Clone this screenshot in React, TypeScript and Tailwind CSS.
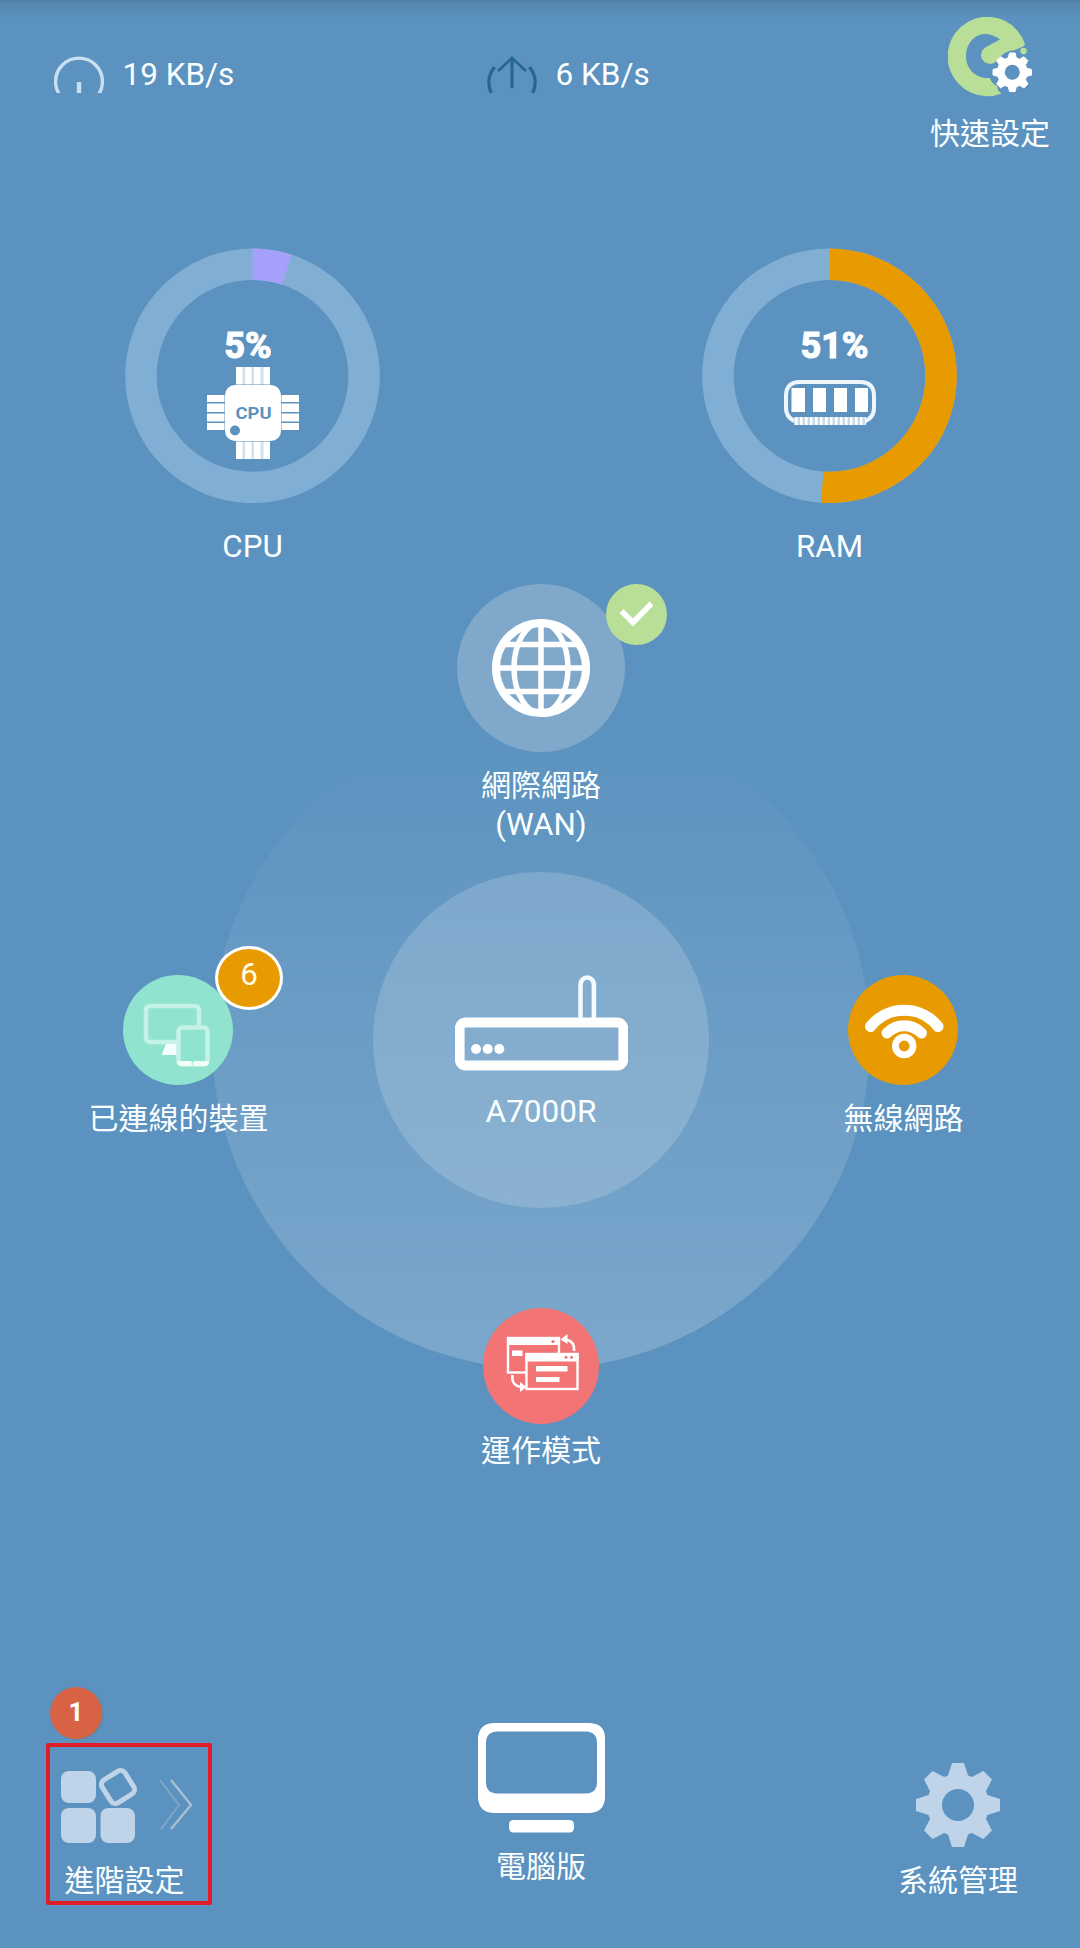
import type { ReactNode } from 'react';

function gearPath(c: number, tip: number, base: number, tipHalf: number, baseHalf: number) {
  const parts: string[] = [];
  for (let i = 0; i < 8; i++) {
    const a = (i * Math.PI) / 4 - Math.PI / 2;
    const point = (r: number, w: number) =>
      `${(c + r * Math.cos(a) - w * Math.sin(a)).toFixed(2)} ${(c + r * Math.sin(a) + w * Math.cos(a)).toFixed(2)}`;
    parts.push(
      `${i === 0 ? 'M' : 'L'}${point(base, -baseHalf)}L${point(tip, -tipHalf)}L${point(tip, tipHalf)}L${point(base, baseHalf)}`,
    );
  }
  return parts.join('') + 'Z';
}

function DownloadGauge() {
  return (
    <svg width="50" height="37" viewBox="0 0 50 37" fill="none" stroke="#c9dff1">
      <circle cx="25" cy="25.500" r="23.400" strokeWidth="3.400" />
      <path d="M25 26V37" strokeWidth="4.400" />
    </svg>
  );
}

function UploadGauge() {
  return (
    <svg width="50" height="37" viewBox="0 0 50 37" fill="none" stroke="#276595" strokeWidth="3.200">
      <path d="M25 2V31" strokeLinecap="round" />
      <path d="M11 15L25 2L39 15" strokeWidth="2.600" />
      <path d="M7.500 11Q-2 23 4.500 38M42.500 11Q52 23 45.500 38" />
    </svg>
  );
}

function QuickIcon() {
  return (
    <svg width="84" height="93" viewBox="0 0 84 93">
      <path
        fill="#b8de97"
        d="M53.700 76.500A39.700 39.700 0 1 1 77 27Q77 29 74 30L67 33Q57 34 52 40Q48 46 43 47Q34 46 33 39Q33 33 38 30L52 22.500Q45 17 36 17C25 18 18 28 18 39C18 53 29 62 42 61Q43 66 49 69Q49 74 53.700 76.500Z"
      />
      <circle cx="75.500" cy="34" r="3.200" fill="#b8de97" />
      <g transform="translate(44 35)">
        <path d={gearPath(20.3, 19.3, 14.5, 2.8, 4)} fill="#fff" stroke="#fff" strokeLinejoin="round" />
        <circle cx="20.300" cy="20.300" r="7.500" fill="#5b92bf" />
      </g>
    </svg>
  );
}

function CpuIcon() {
  const pins = [29, 38, 47, 56.5];
  return (
    <svg width="92" height="92" viewBox="0 0 92 92" fill="#fff">
      <path d="M29 0H63V92H29Z" opacity="0.72" />
      {pins.map((p) => (
        <rect key={p} x={p} y="0" width="6.500" height="92" />
      ))}
      <path d="M0 28h92v7H0ZM0 36.500h92v8.500H0ZM0 46.500h92v8H0ZM0 56h92v7H0Z" />
      <rect x="17" y="17" width="58" height="58" rx="12" fill="#5b92bf" opacity="0.5" />
      <rect x="18" y="18" width="56" height="56" rx="10" />
      <circle cx="28" cy="63.500" r="5" fill="#5b92bf" />
      <text
        x="46.500"
        y="51.500"
        textAnchor="middle"
        textLength="36"
        lengthAdjust="spacingAndGlyphs"
        className="fill-[#5b92bf] font-['Roboto',sans-serif] text-[16px] font-bold"
      >
        CPU
      </text>
    </svg>
  );
}

function RamIcon() {
  return (
    <svg className="mt-[13px]" width="92" height="45" viewBox="0 0 92 45">
      <path
        d="M13 42C7 40 2 36 2 28V16Q2 2 16 2H76Q90 2 90 16V28C90 36 85 40 79 42"
        fill="none"
        stroke="#eef6fc"
        strokeWidth="4"
      />
      <path d="M7.500 8h13.500v24H7.500ZM29 8h13v24H29ZM50 8h13v24H50ZM71 8h13v24H71Z" fill="#fff" />
      <path d="M10 41H82" stroke="#c5dbec" strokeWidth="8" />
      <path d="M11 41H82" stroke="#fff" strokeWidth="8" strokeDasharray="2.500 2.500" />
    </svg>
  );
}

function Ring({ value, color }: { value: number; color: string }) {
  const r = 111.6;
  const length = 2 * Math.PI * r;
  return (
    <svg width="255" height="255" viewBox="0 0 255 255" fill="none" strokeWidth="31.500">
      <circle cx="127.500" cy="127.800" r={r} stroke="#81aed3" />
      <circle
        cx="127.500"
        cy="127.800"
        r={r}
        stroke={color}
        strokeDasharray={`${(length * value) / 100} ${length}`}
        transform="rotate(-90 127.500 127.800)"
      />
    </svg>
  );
}

function Meter({ value, color, label, nudge, icon }: { value: number; color: string; label: string; nudge: string; icon: ReactNode }) {
  return (
    <div className="flex w-[255px] flex-col items-center">
      <div className="relative h-[255px] w-[255px]">
        <Ring value={value} color={color} />
        <div className="absolute inset-0 flex flex-col items-center pt-[77px]">
          <span className={`h-[42px] text-[36px] leading-[42px] font-bold [-webkit-text-stroke:1.2px_white] ${nudge}`}>{value}%</span>
          {icon}
        </div>
      </div>
      <span className="mt-[26px] text-[31.300px]">{label}</span>
    </div>
  );
}

function Globe() {
  return (
    <svg width="98" height="98" viewBox="0 0 98 98" fill="none" stroke="#fff" strokeWidth="5.500">
      <circle cx="49" cy="49" r="45" strokeWidth="8" />
      <ellipse cx="49" cy="49" rx="27" ry="45" />
      <path d="M49 4V94M4 49H94M12 25.500H86M12 72.500H86" />
    </svg>
  );
}

function Router() {
  return (
    <svg width="173" height="96" viewBox="0 0 173 96">
      <path d="M125.500 44V9.500a6.700 7 0 0 1 13.400 0V44" fill="none" stroke="#f4f9fd" strokeWidth="4.600" />
      <rect x="4.700" y="47.500" width="163.600" height="43" rx="6" fill="none" stroke="#fff" strokeWidth="9.800" />
      <g fill="#fff">
        <circle cx="21" cy="74" r="5" />
        <circle cx="32.700" cy="74" r="5" />
        <circle cx="44.300" cy="74" r="5" />
      </g>
    </svg>
  );
}

function DevicesIcon() {
  return (
    <svg width="110" height="110" viewBox="0 0 110 110">
      <rect x="23" y="31" width="53" height="36" rx="4" fill="none" stroke="#c5f1e6" strokeWidth="4.500" />
      <path d="M43 69H56V80H38.500Z" fill="#f3fffb" />
      <rect x="55.500" y="52.500" width="29" height="37" rx="4" fill="#90e3ce" stroke="#c5f1e6" strokeWidth="4.500" />
      <path d="M54 86H68.500V91H58Q54.500 91 54 86ZM70.500 86H86Q86 91 82 91H70.500Z" fill="#f3fffb" />
    </svg>
  );
}

function WifiIcon() {
  return (
    <svg width="110" height="110" viewBox="0 0 110 110" fill="none" stroke="#fff" strokeLinecap="round">
      <path d="M22.500 51.500A43 43 0 0 1 90 51.500" strokeWidth="11" />
      <path d="M39 58A24 24 0 0 1 73.500 58" strokeWidth="11" />
      <circle cx="56.200" cy="71" r="8.800" strokeWidth="6.800" />
    </svg>
  );
}

function ModeIcon() {
  return (
    <svg width="116" height="116" viewBox="0 0 116 116" fill="none" stroke="#fff" strokeWidth="2.400">
      <rect x="25" y="30" width="51" height="34.500" />
      <path d="M24 29H77V37H24ZM29 42.500H39.500V48H29Z" fill="#fff" stroke="none" />
      <rect x="43.500" y="46" width="51" height="35" fill="#f27474" />
      <path d="M42.500 45H95.500V53.500H42.500ZM53 58H84.500V63.500H53ZM53 69H76.500V74H53Z" fill="#fff" stroke="none" />
      <g fill="#f27474" stroke="none">
        <circle cx="70" cy="33.500" r="1.600" />
        <circle cx="83" cy="49.300" r="1.500" />
        <circle cx="88.500" cy="49.300" r="1.500" />
      </g>
      <path d="M91 43Q92 33 82 31.500M29.500 67Q28 78 39 79" strokeWidth="2.600" />
      <path d="M84.500 26V36L77.500 31.500ZM37 74V84L43.500 79Z" fill="#fff" stroke="none" />
    </svg>
  );
}

function AppsIcon() {
  return (
    <svg className="ml-[5px]" width="131" height="78" viewBox="0 0 131 78" fill="#bfd4e8">
      <rect x="0" y="6" width="35" height="32" rx="8" />
      <rect x="0" y="43" width="35" height="35" rx="8" />
      <rect x="39.500" y="43" width="34.500" height="35" rx="8" />
      <rect x="43.500" y="8.500" width="27" height="27" rx="5.500" fill="none" stroke="#bfd4e8" strokeWidth="5" transform="rotate(-32 57 22)" />
      <path d="M99 15L118 40L100 64" fill="none" stroke="#7ea6c8" strokeWidth="2" />
      <path d="M110 15L130 40L110 64" fill="none" stroke="#a9bfd2" strokeWidth="2.400" />
    </svg>
  );
}

function DesktopIcon() {
  return (
    <svg className="ml-[2px]" width="128" height="112" viewBox="0 0 128 112" fill="#fff">
      <path
        fillRule="evenodd"
        d="M15 1H112Q127 2 127 16V76Q126 90 112 91H15Q1 90 0 76V16Q1 2 15 1ZM19 9.500Q8 10 8 21V60Q8 71 19 71.500H108Q119 71 119 60V21Q119 10 108 9.500Z"
      />
      <rect x="31" y="98" width="65" height="12.500" rx="4.500" />
    </svg>
  );
}

function GearIcon() {
  return (
    <svg width="84" height="84" viewBox="0 0 84 84">
      <path d={gearPath(42, 42, 29.5, 6, 10)} fill="#bfd4e8" />
      <circle cx="42" cy="42" r="16" fill="#5b92bf" />
    </svg>
  );
}

function Speed({ icon, children }: { icon: ReactNode; children: ReactNode }) {
  return (
    <div className="flex w-[433px] items-start gap-[18.500px] pt-14 text-[31.500px]">
      {icon}
      <span className="mt-px">{children}</span>
    </div>
  );
}

function Node({ place, gap, label, children }: { place: string; gap: string; label: ReactNode; children: ReactNode }) {
  return (
    <div className={`absolute flex w-[200px] flex-col items-center text-center ${place}`}>
      {children}
      <div className={gap}>{label}</div>
    </div>
  );
}

export default function App() {
  return (
    <div className="relative flex h-[1948px] w-[1080px] flex-col overflow-hidden bg-[#5b92bf] font-['Roboto','Noto_Sans_CJK_TC',sans-serif] text-[30px] leading-9 text-[#fbffff]">
      <header className="flex h-[248px] bg-[linear-gradient(to_bottom,#527da4_0px,#5887b0_4px,#5b92bf_18px)] pl-[54px]">
        <Speed icon={<DownloadGauge />}>19 KB/s</Speed>
        <Speed icon={<UploadGauge />}>6 KB/s</Speed>
        <div className="-ml-[20px] flex w-[180px] flex-col items-center pt-[17px]">
          <QuickIcon />
          <span className="mt-[6px]">快速設定</span>
        </div>
      </header>

      <section className="flex h-[336px] justify-between pr-[123px] pl-[125px]">
        <Meter value={5} color="#a5a1fb" label="CPU" nudge="-ml-[9px]" icon={<CpuIcon />} />
        <Meter value={51} color="#e89b00" label="RAM" nudge="ml-[10px]" icon={<RamIcon />} />
      </section>

      <main className="relative h-[906px]">
        <div className="absolute top-[127px] left-[212px] size-[658px] rounded-full bg-linear-to-b from-white/0 to-white/20" />
        <div className="absolute top-[288px] left-[373px] flex size-[336px] flex-col items-center rounded-full bg-[#e4f0f4]/20 pt-[103px]">
          <Router />
          <span className="mt-[23px] text-[31.500px]">A7000R</span>
        </div>

        <Node
          place="top-0 left-[441px]"
          gap="mt-[14px] leading-[39px]"
          label={
            <>
              網際網路
              <br />
              <span className="text-[31.300px]">(WAN)</span>
            </>
          }
        >
          <div className="relative flex size-[168px] items-center justify-center rounded-full bg-[#7fa8cb]">
            <Globe />
            <div className="absolute top-0 left-[149px] size-[61px] rounded-full bg-[#b8de97]">
              <svg width="61" height="61" viewBox="0 0 61 61" fill="none" stroke="#fff" strokeWidth="5.500">
                <path d="M15.500 27L27 38.500L45.500 19.500" />
              </svg>
            </div>
          </div>
        </Node>

        <Node place="top-[391px] left-[78px]" gap="mt-4 ml-px" label="已連線的裝置">
          <div className="relative size-[110px] rounded-full bg-[#90e3ce]">
            <DevicesIcon />
            <div className="absolute -top-[29px] left-[92px] h-16 w-[68px] rounded-[50%] border-[3px] border-white bg-[#e89b00] pt-2 text-center text-[31.300px] text-[#fffde8]">
              6
            </div>
          </div>
        </Node>

        <Node place="top-[391px] left-[803px]" gap="mt-4 ml-px" label="無線網路">
          <div className="size-[110px] rounded-full bg-[#e89b00]">
            <WifiIcon />
          </div>
        </Node>

        <Node place="top-[724px] left-[441px]" gap="mt-[9px]" label="運作模式">
          <div className="size-[116px] rounded-full bg-[#f27474]">
            <ModeIcon />
          </div>
        </Node>
      </main>

      <footer className="flex items-end justify-between pt-[232px] pr-[22px] pl-[24px]">
        <div className="flex w-[200px] flex-col items-center">
          <AppsIcon />
          <span className="mt-5 ml-px">進階設定</span>
        </div>
        <div className="mb-[14px] flex w-[200px] flex-col items-center">
          <DesktopIcon />
          <span className="mt-[15px]">電腦版</span>
        </div>
        <div className="flex w-[200px] flex-col items-center">
          <GearIcon />
          <span className="mt-4">系統管理</span>
        </div>
      </footer>

      <div className="absolute top-[1743px] left-[46px] h-[162px] w-[166px] rounded-[2px] border-4 border-[#e41b28]" />
      <div className="absolute top-[1687px] left-[50px] flex size-[52px] items-center justify-center rounded-full bg-[#d86344] pb-[2px] text-[26px] font-bold shadow-[1px_1px_1px_rgba(120,120,120,0.6)]">
        1
      </div>
    </div>
  );
}
